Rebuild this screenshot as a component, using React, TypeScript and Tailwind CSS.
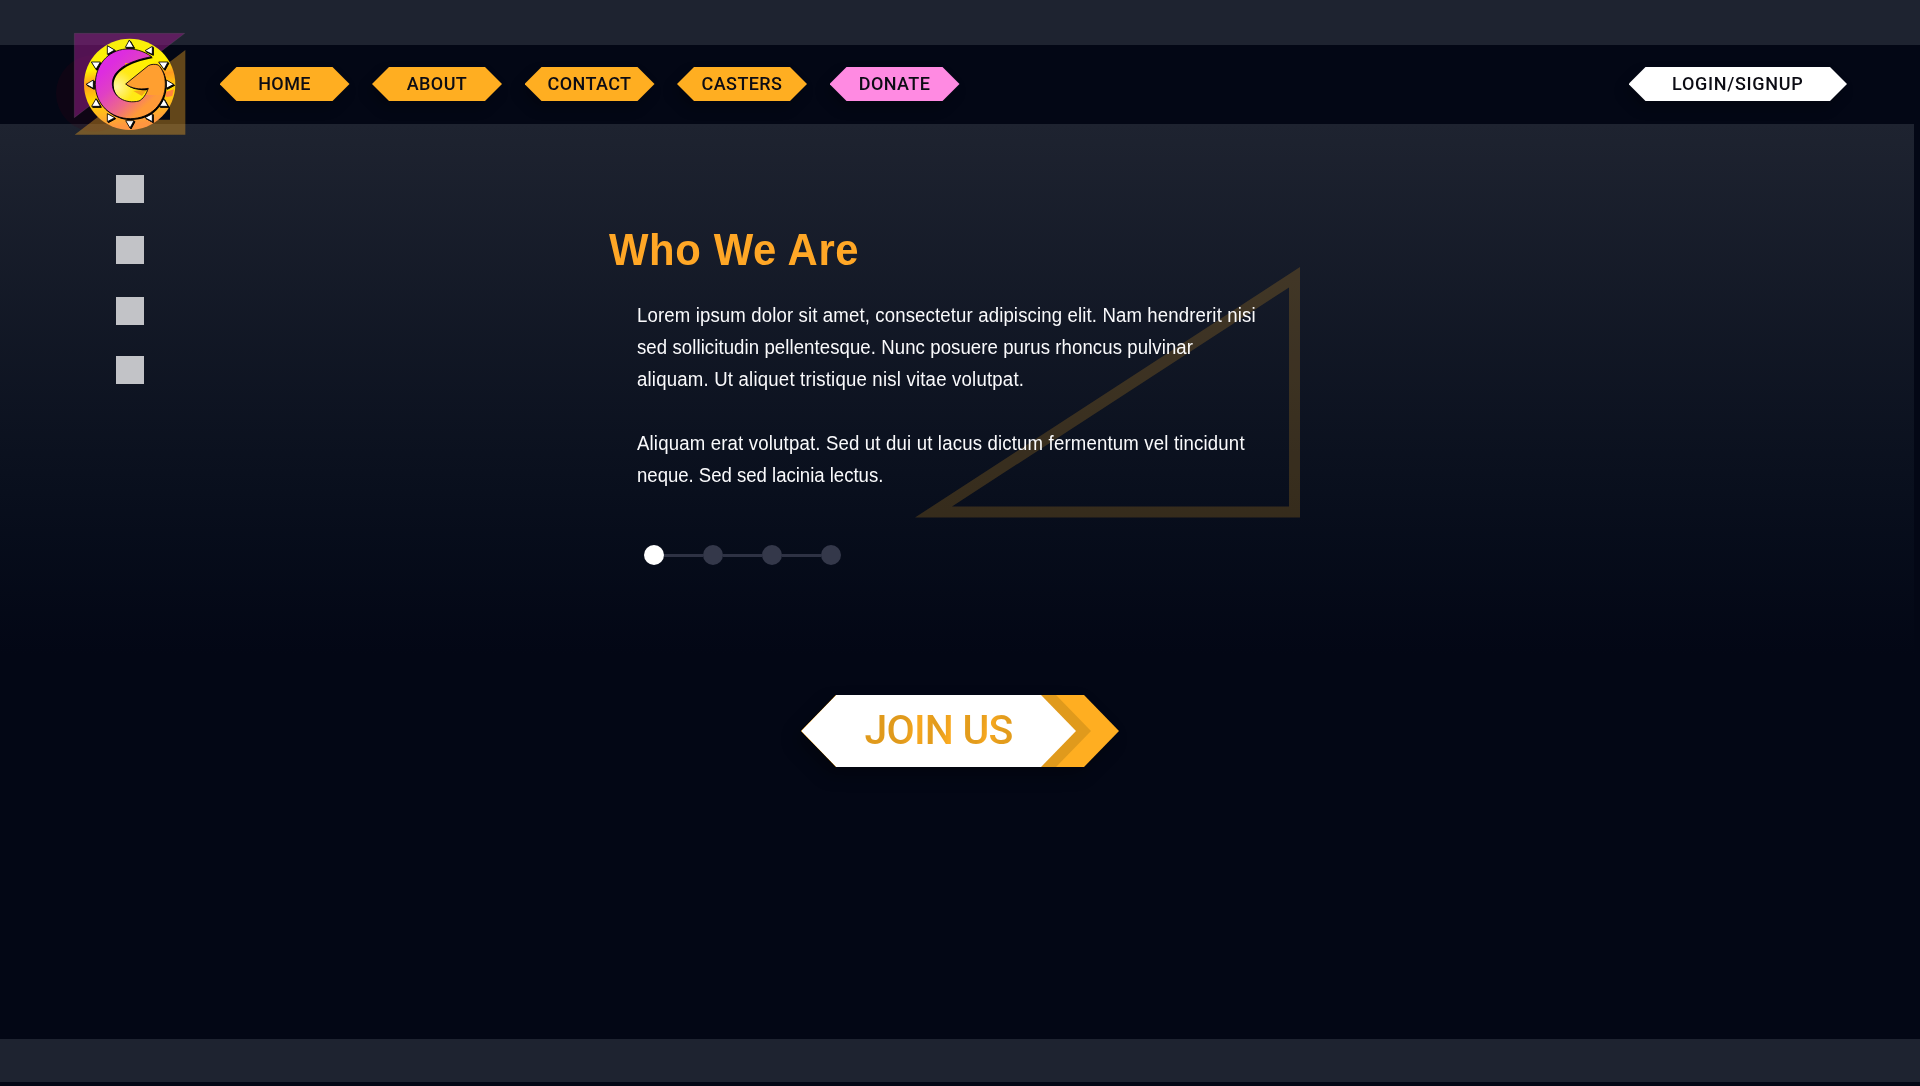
import type { ReactNode } from 'react';

const navItems = [
  { label: 'HOME', color: 'bg-[#ffae21]' },
  { label: 'ABOUT', color: 'bg-[#ffae21]' },
  { label: 'CONTACT', color: 'bg-[#ffae21]' },
  { label: 'CASTERS', color: 'bg-[#ffae21]' },
  { label: 'DONATE', color: 'bg-[#ff8ae2]' },
];

function HexButton({ className, children }: { className: string; children: ReactNode }) {
  return (
    <div className="drop-shadow-[-4px_7px_6px_rgba(0,0,0,0.25)]">
      <button
        className={`flex h-[34px] items-center justify-center text-[18px] leading-none font-medium text-[#0c0c14] [clip-path:polygon(17px_0,calc(100%-17px)_0,100%_50%,calc(100%-17px)_100%,17px_100%,0_50%)] ${className}`}
      >
        {children}
      </button>
    </div>
  );
}

const teeth = [
  '238,45 226,67 251,67',
  '307,64 285,77 307,88',
  '326,111 354,111 342,133',
  '349,165 371,178 349,190',
  '341,221 354,244 328,244',
  '307,266 285,278 307,290',
  '227,287 252,287 240,309',
  '172,266 194,278 172,290',
  '138,221 151,244 125,244',
  '130,165 108,178 130,190',
  '124,111 151,111 138,133',
  '172,62 194,75 172,88',
];

const gShape =
  'M305 95 C280 77 252 70 228 72 C172 76 136 122 136 178 C136 238 182 281 241 281 C302 281 346 236 346 177 C346 153 338 133 325 120 C315 117 304 117 295 122 L227 177 C246 191 267 194 295 190 C288 209 279 222 267 228 C226 238 188 216 187 177 C187 135 232 109 305 95 Z';

function Logo() {
  return (
    <svg className="absolute top-[25px] left-[50px] h-[130px] w-[150px]" viewBox="0 0 450 390">
      <defs>
        <linearGradient id="sun" x1="0" y1="0" x2="0.15" y2="1">
          <stop offset="0" stopColor="#f7ee12" />
          <stop offset="0.35" stopColor="#fff200" />
          <stop offset="0.5" stopColor="#ff9a20" />
          <stop offset="0.68" stopColor="#ffd800" />
          <stop offset="1" stopColor="#ff9640" />
        </linearGradient>
        <linearGradient id="letter" gradientUnits="userSpaceOnUse" x1="190" y1="110" x2="310" y2="240">
          <stop offset="0" stopColor="#dd2ce0" />
          <stop offset="0.3" stopColor="#e040c4" />
          <stop offset="0.65" stopColor="#ee6a88" />
          <stop offset="0.92" stopColor="#ff9a38" />
        </linearGradient>
        <clipPath id="tail">
          <rect x="225" y="114" width="140" height="96" />
        </clipPath>
        <radialGradient id="core" cx="0.28" cy="0.55" r="0.6">
          <stop offset="0" stopColor="#fff6a0" />
          <stop offset="0.45" stopColor="#ffe818" />
          <stop offset="1" stopColor="#fff200" />
        </radialGradient>
      </defs>
      <circle cx="133" cy="205" r="115" fill="#3c0014" fillOpacity="0.2" />
      <path d="M73 25 H404 L73 278 Z" fill="#8c1c80" fillOpacity="0.58" stroke="#777" strokeOpacity="0.3" strokeWidth="2" />
      <path d="M406 75 V329 H74 Z M360 160 V284 H200 Z" fillRule="evenodd" fill="#ffae21" fillOpacity="0.38" />
      <circle cx="239" cy="178" r="137" fill="url(#sun)" />
      <circle cx="242" cy="176" r="95" fill="url(#core)" />
      <path d="M250 198 l42 -5 l-16 20 z" fill="#f08a20" fillOpacity="0.7" />
      <path d="M348 200 l24 -7 l-5 20 l-20 4 z" fill="#ff6a50" fillOpacity="0.75" />
      {teeth.map((points) => (
        <g key={points}>
          <polygon points={points} transform="translate(3 3)" fill="#000" stroke="#000" strokeWidth="3" />
          <polygon points={points} fill="#fff" stroke="#000" strokeWidth="2.5" />
        </g>
      ))}
      <path d={gShape} transform="translate(4 4)" fill="#000" />
      <path d={gShape} fill="url(#letter)" />
      <path d={gShape} fill="#ff9f30" clipPath="url(#tail)" />
      <path d={gShape} fill="none" stroke="#000" strokeWidth="2.5" />
    </svg>
  );
}

const lines = [
  { text: 'Lorem ipsum dolor sit amet, consectetur adipiscing elit. Nam hendrerit nisi', spacing: 'tracking-[0.14px]' },
  { text: 'sed sollicitudin pellentesque. Nunc posuere purus rhoncus pulvinar', spacing: 'tracking-[0.08px]' },
  { text: 'aliquam. Ut aliquet tristique nisl vitae volutpat.', spacing: 'tracking-[0.21px]' },
  { text: '', spacing: '' },
  { text: 'Aliquam erat volutpat. Sed ut dui ut lacus dictum fermentum vel tincidunt', spacing: 'tracking-[0.18px]' },
  { text: 'neque. Sed sed lacinia lectus.', spacing: 'tracking-[-0.03px]' },
];

export default function App() {
  return (
    <div className="relative flex h-[1086px] w-[1920px] flex-col overflow-hidden bg-[#030715] font-[Roboto,'Liberation_Sans',sans-serif]">
      <div className="h-[45px] shrink-0 bg-[#1e2330]" />

      <header className="flex h-[79px] shrink-0 items-start justify-between pt-[22px] pr-[73px] pl-[219.5px]">
        <nav className="flex gap-[22.5px]">
          {navItems.map((item) => (
            <HexButton key={item.label} className={`w-[130px] tracking-[0.4px] ${item.color}`}>
              {item.label}
            </HexButton>
          ))}
        </nav>
        <HexButton className="w-[218.5px] bg-white tracking-[0.7px]">LOGIN/SIGNUP</HexButton>
      </header>
      <Logo />

      <main className="flex h-[915px] shrink-0 flex-col">
        <section className="flex h-[530px] w-[1914px] shrink-0 bg-linear-to-b from-[#1e2330] to-[#030715]">
          <aside className="ml-[116px] flex w-7 shrink-0 flex-col gap-[33px] pt-[51px]">
            <div className="size-7 bg-[#c2c3c7]" />
            <div className="size-7 bg-[#c2c3c7]" />
            <div className="size-7 bg-[#c2c3c7]" />
            <div className="-mt-0.5 size-7 bg-[#c2c3c7]" />
          </aside>

          <div className="relative ml-[464px] w-[692px] pt-[98px] font-['Liberation_Sans',Arial,sans-serif]">
            <svg className="absolute top-[143px] left-[307px] h-[251px] w-[386px]" viewBox="0 0 386 251">
              <path
                d="M385 0 V250.5 H0 Z M374 20.5 L37 239.5 H374 Z"
                fillRule="evenodd"
                fill="#ffae21"
                fillOpacity="0.19"
              />
            </svg>
            <h1 className="ml-px origin-left scale-x-[0.93] text-[45px] leading-[56px] font-bold tracking-[0.65px] text-[#ffa726]">
              Who We Are
            </h1>
            <div className="relative mt-[21px] ml-[29px] origin-left scale-x-[0.93] text-[20px] leading-8 whitespace-nowrap text-[#fafafc]">
              {lines.map((line, i) => (
                <p key={i} className={`h-8 ${line.spacing}`}>
                  {line.text}
                </p>
              ))}
            </div>
            <div className="mt-[54px] ml-[36px] flex items-center">
              <span className="size-5 rounded-full bg-white" />
              <span className="h-[3px] w-[39px] bg-[#2e3244]" />
              <span className="size-5 rounded-full bg-[#34384a]" />
              <span className="h-[3px] w-[39px] bg-[#2e3244]" />
              <span className="size-5 rounded-full bg-[#34384a]" />
              <span className="h-[3px] w-[39px] bg-[#2e3244]" />
              <span className="size-5 rounded-full bg-[#34384a]" />
            </div>
          </div>
        </section>

        <div className="mt-[41px] ml-[801px] w-[318px] drop-shadow-[-6px_8px_8px_rgba(0,0,0,0.3)]">
          <button className="flex h-[72px] w-[318px] bg-[#ffae21] [clip-path:polygon(35px_0,calc(100%-35px)_0,100%_50%,calc(100%-35px)_100%,35px_100%,0_50%)]">
            <span className="flex h-full w-[290px] bg-[#e09a1c] [clip-path:polygon(35px_0,calc(100%-35px)_0,100%_50%,calc(100%-35px)_100%,35px_100%,0_50%)]">
              <span className="flex h-full w-[275px] items-center justify-center bg-white pb-[2px] [clip-path:polygon(35px_0,calc(100%-35px)_0,100%_50%,calc(100%-35px)_100%,35px_100%,0_50%)]">
                <span className="bg-linear-[100deg,#e09a1c_0%,#e09a1c_28%,#fbab22_36%,#e39c1c_46%,#e39c1c_50%,#fbab22_58%,#e39c1c_68%,#e39c1c_76%,#fbab22_82%,#e39c1c_90%] bg-clip-text text-[41px] leading-[48px] font-medium tracking-[-0.8px] text-transparent">
                  JOIN US
                </span>
              </span>
            </span>
          </button>
        </div>
      </main>

      <footer className="h-[43px] shrink-0 bg-[#1e2330]" />
    </div>
  );
}
